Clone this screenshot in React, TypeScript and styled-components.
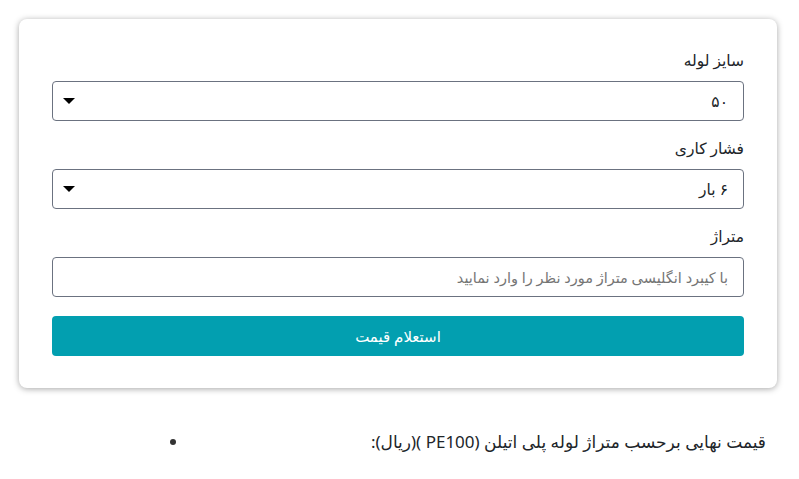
import React from "react";
import styled, { createGlobalStyle } from "styled-components";

const Global = createGlobalStyle`
  html, body { margin: 0; padding: 0; background: #fff; }
  body { font-family: "Segoe UI", "Noto Sans", "DejaVu Sans", sans-serif; color: #212529; }
  * { box-sizing: border-box; }
`;

const Page = styled.div`
  width: 799px;
  padding: 19px 22px 0 19px;
`;

const Card = styled.form`
  direction: rtl;
  background: #fff;
  border-radius: 8px;
  box-shadow: 0 1px 6px rgba(0, 0, 0, 0.35);
  padding: 30px 33px 32px 33px;
  display: flex;
  flex-direction: column;
`;

const Field = styled.div`
  display: flex;
  flex-direction: column;
  margin-bottom: 16px;
`;

const Label = styled.label`
  font-size: 15.5px;
  line-height: 22px;
  margin-bottom: 10px;
  color: #212529;
`;

const SelectBox = styled.div`
  height: 40px;
  border: 1px solid #6b7280;
  border-radius: 4px;
  display: flex;
  align-items: center;
  justify-content: space-between;
  padding: 0 15px 0 10px;
  font-size: 15.5px;
  color: #212529;
`;

const Caret = styled.span`
  width: 0;
  height: 0;
  border-left: 6px solid transparent;
  border-right: 6px solid transparent;
  border-top: 6px solid #000;
`;

const Input = styled.input`
  height: 40px;
  border: 1px solid #6b7280;
  border-radius: 4px;
  padding: 0 15px;
  font-family: inherit;
  font-size: 14.5px;
  direction: rtl;
  outline: none;
  &::placeholder { color: #757575; }
`;

const Button = styled.button`
  height: 40px;
  margin-top: 3px;
  border: none;
  border-radius: 4px;
  background: #029fb0;
  color: #fff;
  font-family: inherit;
  font-size: 15px;
  cursor: pointer;
`;

const List = styled.ul`
  list-style: none;
  margin: 42px 0 0 0;
  padding: 0 11px 0 151px;
`;

const Item = styled.li`
  display: flex;
  justify-content: space-between;
  align-items: center;
  direction: rtl;
  font-size: 17px;
  color: #212529;
  &::after {
    content: "";
    width: 6px;
    height: 6px;
    border-radius: 50%;
    background: #333;
  }
`;

export default function App() {
  return (
    <Page>
      <Global />
      <Card onSubmit={(e) => e.preventDefault()}>
        <Field>
          <Label>سایز لوله</Label>
          <SelectBox>
            <span>۵۰</span>
            <Caret />
          </SelectBox>
        </Field>
        <Field>
          <Label>فشار کاری</Label>
          <SelectBox>
            <span>۶ بار</span>
            <Caret />
          </SelectBox>
        </Field>
        <Field>
          <Label>متراژ</Label>
          <Input placeholder="با کیبرد انگلیسی متراژ مورد نظر را وارد نمایید" />
        </Field>
        <Button type="submit">استعلام قیمت</Button>
      </Card>
      <List>
        <Item>
          <span>قیمت نهایی برحسب متراژ لوله پلی اتیلن (PE100 )(ریال):</span>
        </Item>
      </List>
    </Page>
  );
}
